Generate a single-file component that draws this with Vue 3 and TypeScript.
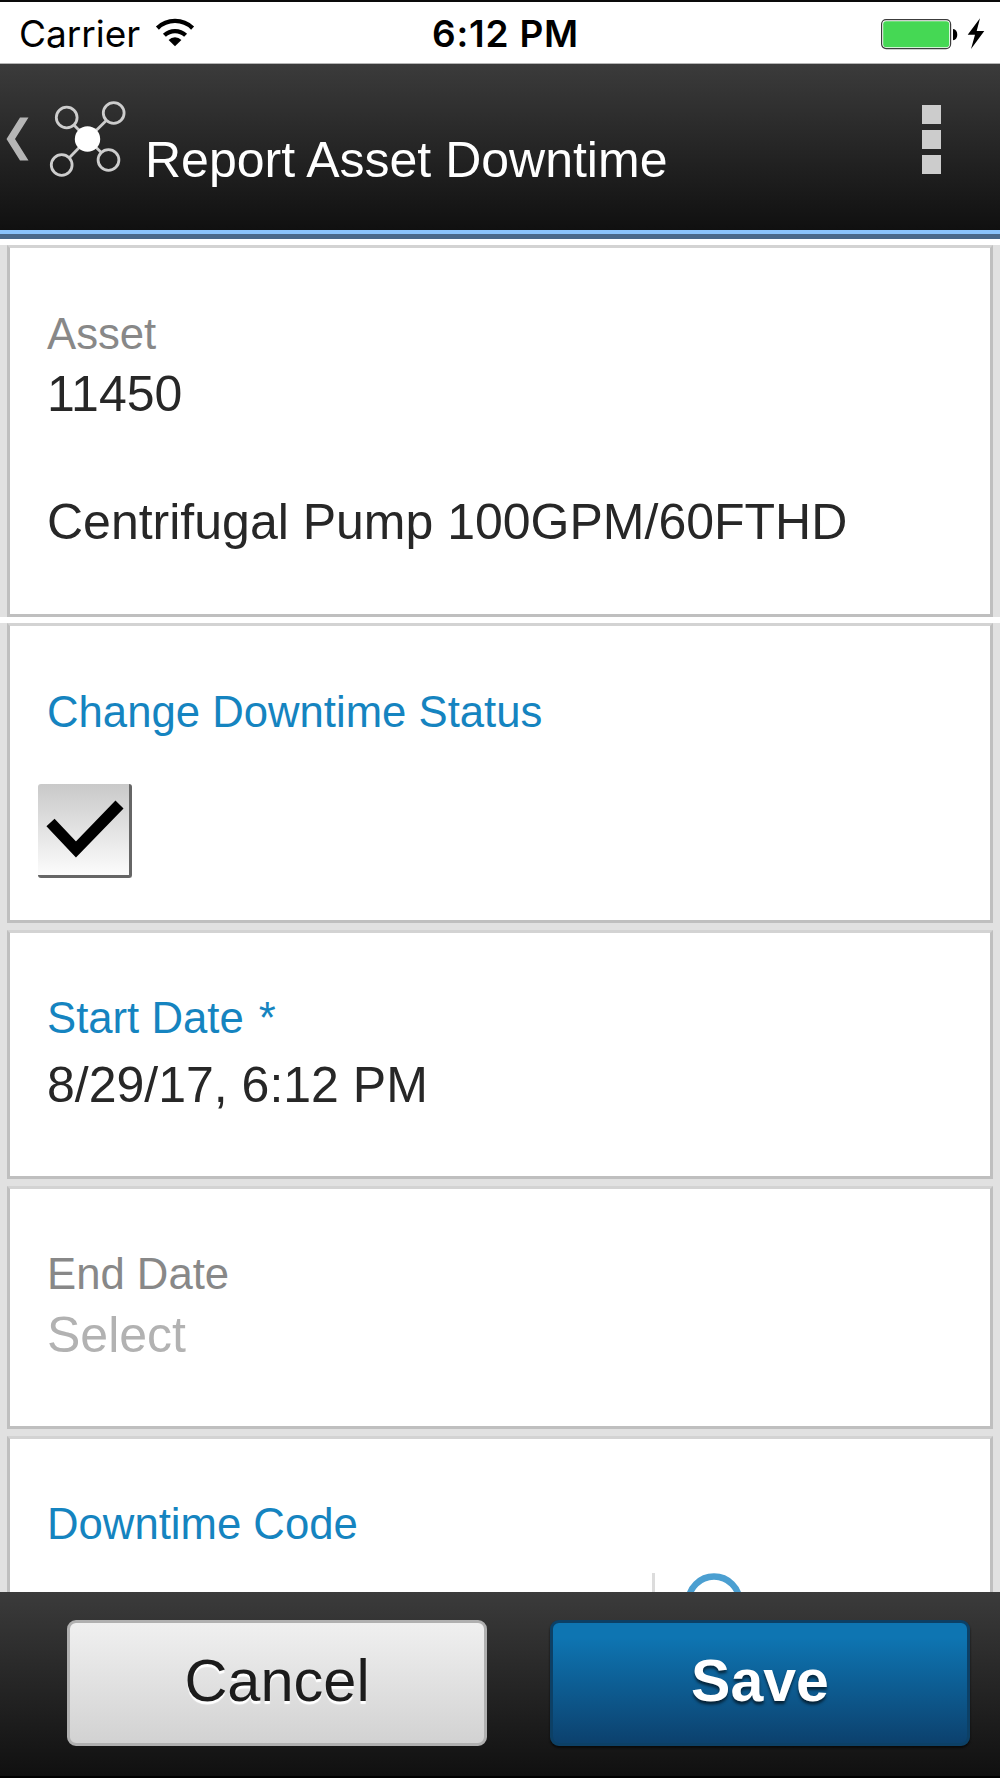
<script setup lang="ts">
import { ref } from 'vue'

const title = 'Report Asset Downtime'
const statusChanged = ref(true)

function toggleStatus() {
  statusChanged.value = !statusChanged.value
}
</script>

<template>
  <div class="screen">
    <div class="status-bar">
      <div class="carrier">
        <span>Carrier</span>
        <svg class="wifi" width="40" height="30" viewBox="0 0 40 30">
          <path d="M2.4 10.1 A25.3 25.3 0 0 1 37.6 10.1" fill="none" stroke="#000" stroke-width="4.3" />
          <path d="M9.4 17.3 A15.3 15.3 0 0 1 30.6 17.3" fill="none" stroke="#000" stroke-width="4.3" />
          <path d="M20 28.3 L13.6 21.9 A9.1 9.1 0 0 1 26.4 21.9 Z" />
        </svg>
      </div>
      <div class="clock">6:12 PM</div>
      <svg class="battery" width="106" height="34" viewBox="0 0 106 34">
        <rect x="1.6" y="2.6" width="69" height="29" rx="4.5" fill="#fff" stroke="#3c3c3c" stroke-width="1.2" />
        <rect x="3.2" y="4.2" width="66" height="26" rx="3" fill="#45d854" />
        <path d="M73 12 C78.700 12 78.700 23.300 73 23.300 Z" />
        <path d="M100 1.300 L87.700 17.700 H95 L91 32 L104.300 14 H96.700 Z" />
      </svg>
    </div>

    <header class="header">
      <svg class="nav" width="130" height="90" viewBox="0 0 130 90">
        <path d="M20 21.500 H28.500 L15 43 L28.500 64.500 H20 L6.500 43 Z" fill="#b5b5b5" />
        <g fill="none" stroke="#cdcdcd" stroke-width="2.800">
          <path d="M74.200 29.200 L87.500 43 L106.300 24.500 M69.300 61.700 L87.500 43 L101.300 56.500" />
          <circle cx="66.700" cy="21.500" r="10.400" />
          <circle cx="113.700" cy="17" r="10.400" />
          <circle cx="61.700" cy="69" r="10.400" />
          <circle cx="108.500" cy="64" r="10.400" />
        </g>
        <circle cx="87.500" cy="43" r="12.700" fill="#fff" />
      </svg>
      <h1>{{ title }}</h1>
      <div class="overflow"><i /><i /><i /></div>
    </header>
    <div class="accent" />

    <main class="form">
      <section class="row asset">
        <div class="card">
          <div class="label">Asset</div>
          <div class="value">11450</div>
          <div class="value description">Centrifugal Pump 100GPM/60FTHD</div>
        </div>
      </section>
      <section class="row change">
        <div class="card">
          <div class="label blue">Change Downtime Status</div>
          <div class="checkbox" @click="toggleStatus">
            <svg v-if="statusChanged" width="94" height="94" viewBox="0 0 94 94">
              <path d="M12.500 38.500 L38 65.500 L81.500 20.500" fill="none" stroke="#000" stroke-width="11.200" />
            </svg>
          </div>
        </div>
      </section>
      <section class="row start">
        <div class="card">
          <div class="label blue">Start Date <span class="required">*</span></div>
          <div class="value">8/29/17, 6:12 PM</div>
        </div>
      </section>
      <section class="row end">
        <div class="card">
          <div class="label">End Date</div>
          <div class="value placeholder">Select</div>
        </div>
      </section>
      <section class="row code">
        <div class="card">
          <div class="label blue">Downtime Code</div>
          <div class="lookup">
            <span class="divider" />
            <svg width="66" height="80" viewBox="0 0 66 80">
              <circle cx="33" cy="29" r="25.500" fill="none" stroke="#4b9fd1" stroke-width="6.400" />
            </svg>
          </div>
        </div>
      </section>
    </main>

    <footer class="footer">
      <button class="cancel">Cancel</button>
      <button class="save">Save</button>
    </footer>
  </div>
</template>

<style>
body {
  margin: 0;
}
</style>

<style scoped>
.screen {
  width: 1000px;
  height: 1778px;
  overflow: hidden;
  display: flex;
  flex-direction: column;
  background: #fff;
  font-family: "Liberation Sans", Arial, sans-serif;
  color: #272727;
}

.status-bar {
  box-sizing: border-box;
  flex: none;
  height: 64px;
  border-top: 2px solid #0a0a0a;
  border-bottom: 1px solid #b5b5b5;
  display: grid;
  grid-template-columns: 1fr auto 1fr;
  align-items: start;
  padding: 0 14px 0 19px;
  font-family: Inter, sans-serif;
  font-size: 37px;
  line-height: 64px;
  color: #000;
}

.carrier {
  display: flex;
}

.wifi {
  margin: 16px 0 0 15px;
}

.clock {
  padding-left: 6px;
  font-weight: 600;
  letter-spacing: 0.8px;
}

.battery {
  justify-self: end;
  margin-top: 15px;
}

.header {
  flex: none;
  height: 166px;
  display: flex;
  background: linear-gradient(#3b3b3b, #101010);
}

.nav {
  margin-top: 32px;
}

h1 {
  flex: 1;
  margin: 68px 0 0 15px;
  font-size: 50px;
  line-height: 56px;
  font-weight: 400;
  color: #fff;
}

.overflow {
  display: flex;
  flex-direction: column;
  gap: 6px;
  margin: 41px 59px 0 0;
}

.overflow i {
  width: 19px;
  height: 19px;
  background: #ccc;
}

.accent {
  flex: none;
  height: 4px;
  border-bottom: 5px solid #4a698a;
  background: #8ac3fb;
  background-clip: padding-box;
}

.form {
  flex: none;
  height: 1347px;
  margin-top: 6px;
  overflow: hidden;
  background: #e1e1e1;
}

.row {
  box-sizing: border-box;
  padding: 0 7px 7px;
}

.card {
  box-sizing: border-box;
  height: 100%;
  border: 3px solid #bfbfbf;
  border-top-color: #d3d3d3;
  background: #fff;
  padding: 60px 0 0 37px;
}

.asset {
  height: 378px;
  padding-bottom: 0;
  border-bottom: 6px solid #fff;
}

.asset .card,
.change .card {
  padding-top: 61px;
}

.change {
  height: 307px;
}

.start {
  height: 256px;
}

.end {
  height: 250px;
}

.code {
  height: 300px;
}

.label {
  font-size: 43.7px;
  line-height: 50px;
  color: #888;
}

.label.blue {
  color: #1584c0;
}

.required {
  margin-left: 3px;
}

.value {
  margin-top: 7px;
  font-size: 50px;
  line-height: 56px;
}

.description {
  margin-top: 72px;
}

.start .value {
  margin-top: 14px;
}

.end .value {
  margin-top: 8px;
}

.placeholder {
  color: #b2b2b2;
}

.checkbox {
  box-sizing: border-box;
  width: 94px;
  height: 94px;
  margin: 47px 0 0 -9px;
  border-right: 3px solid #666;
  border-bottom: 3px solid #666;
  border-radius: 3px;
  background: linear-gradient(#c9c9c9, #fcfcfc);
}

.checkbox svg {
  display: block;
}

.lookup {
  display: flex;
  margin: 24px 0 0 605px;
}

.divider {
  width: 3px;
  height: 90px;
  margin-right: 26px;
  background: #dcdcdc;
}

.footer {
  box-sizing: border-box;
  flex: none;
  height: 186px;
  padding: 28px 30px 0 67px;
  display: flex;
  gap: 63px;
  border-bottom: 2px solid #000;
  background: linear-gradient(#3b3b3b, #101010);
}

button {
  box-sizing: border-box;
  flex: 1;
  height: 126px;
  padding: 0 0 5px;
  border-radius: 9px;
  font-family: inherit;
  font-size: 59.5px;
  line-height: 70px;
}

.cancel {
  border: 3px solid #b0b0b0;
  background: linear-gradient(#f0f0f0, #d2d2d2);
  color: #1c1c1c;
  text-shadow: 0 3px 1px #fff;
}

.save {
  border: 3px solid #0c4066;
  background: linear-gradient(#0e75b2 12%, #0c416e);
  color: #fff;
  font-size: 59px;
  font-weight: 700;
  text-shadow: 0 3px 3px rgba(0, 0, 0, 0.6);
  box-shadow: 0 2px 2px #0a0a0a;
}
</style>
